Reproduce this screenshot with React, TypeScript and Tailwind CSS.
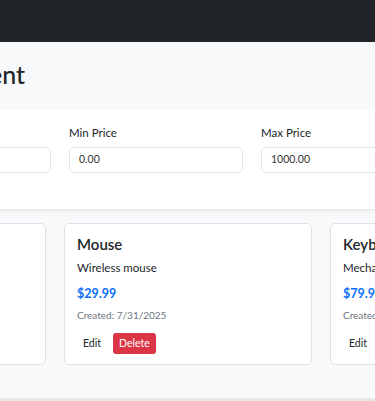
import React from 'react';

type Product = {
  name: string;
  description: string;
  price: string;
  created: string;
};

const products: Product[] = [
  { name: 'Laptop', description: 'High-performance laptop', price: '$999.99', created: '7/31/2025' },
  { name: 'Mouse', description: 'Wireless mouse', price: '$29.99', created: '7/31/2025' },
  { name: 'Keyboard', description: 'Mechanical keyboard', price: '$79.99', created: '7/31/2025' },
];

const filters = [
  { label: 'Search', value: '' },
  { label: 'Min Price', value: '0.00' },
  { label: 'Max Price', value: '1000.00' },
];

const ProductCard: React.FC<{ product: Product }> = ({ product }) => (
  <div className="w-[248px] h-[142px] shrink-0 bg-white border border-[#dee2e6] rounded-[5px] px-[12px] pt-[11px]">
    <h5 className="text-[15px] leading-[18px] font-semibold text-[#212529] whitespace-nowrap">{product.name}</h5>
    <p className="mt-[6px] text-[11.5px] leading-[18px] text-[#212529] whitespace-nowrap">{product.description}</p>
    <p className="mt-[7px] text-[12.5px] leading-[20px] font-bold text-[#0d6efd]">{product.price}</p>
    <p className="mt-[3px] text-[10px] leading-[16px] text-[#6c757d] whitespace-nowrap">Created: {product.created}</p>
    <div className="mt-[10px] flex items-center gap-[6px]">
      <button className="h-[21px] px-[6px] rounded-[3px] text-[10.5px] text-[#212529] bg-white">Edit</button>
      <button className="h-[21px] px-[6px] rounded-[3px] text-[10.5px] text-white bg-[#dc3545]">Delete</button>
    </div>
  </div>
);

const App: React.FC = () => {
  return (
    <div className="w-[375px] h-[401px] overflow-hidden bg-[#f8f9fa] font-['Lato','Liberation_Sans',sans-serif] text-[#212529]">
      {/* Navbar */}
      <div className="h-[42px] bg-[#212529]" />

      {/* Page title */}
      <div className="h-[67px] flex items-center">
        <div className="w-[25px] flex justify-end -mt-[3px]">
          <h2 className="shrink-0 whitespace-nowrap text-[25px] leading-[30px] font-medium">Product Management</h2>
        </div>
      </div>

      {/* Filters */}
      <div className="h-[100px] bg-white shadow-[0_2px_3px_rgba(0,0,0,0.08)] pt-[14px] relative">
        <div className="-ml-[123px] flex gap-[18px]">
          {filters.map((f) => (
            <div key={f.label} className="w-[174px] shrink-0">
              <label className="block text-[11.5px] leading-[18px] text-[#212529] pt-[1px]">{f.label}</label>
              <div className="mt-[5px] h-[26px] border border-[#dee2e6] rounded-[5px] px-[9px] flex items-center text-[10.5px] text-[#333]">
                {f.value}
              </div>
            </div>
          ))}
        </div>
      </div>

      {/* Products */}
      <div className="h-[192px] pt-[14px] border-b-[3px] border-[#e9e7ea]">
        <div className="-ml-[202px] flex gap-[18px]">
          {products.map((p) => (
            <ProductCard key={p.name} product={p} />
          ))}
        </div>
      </div>
    </div>
  );
};

export default App;
